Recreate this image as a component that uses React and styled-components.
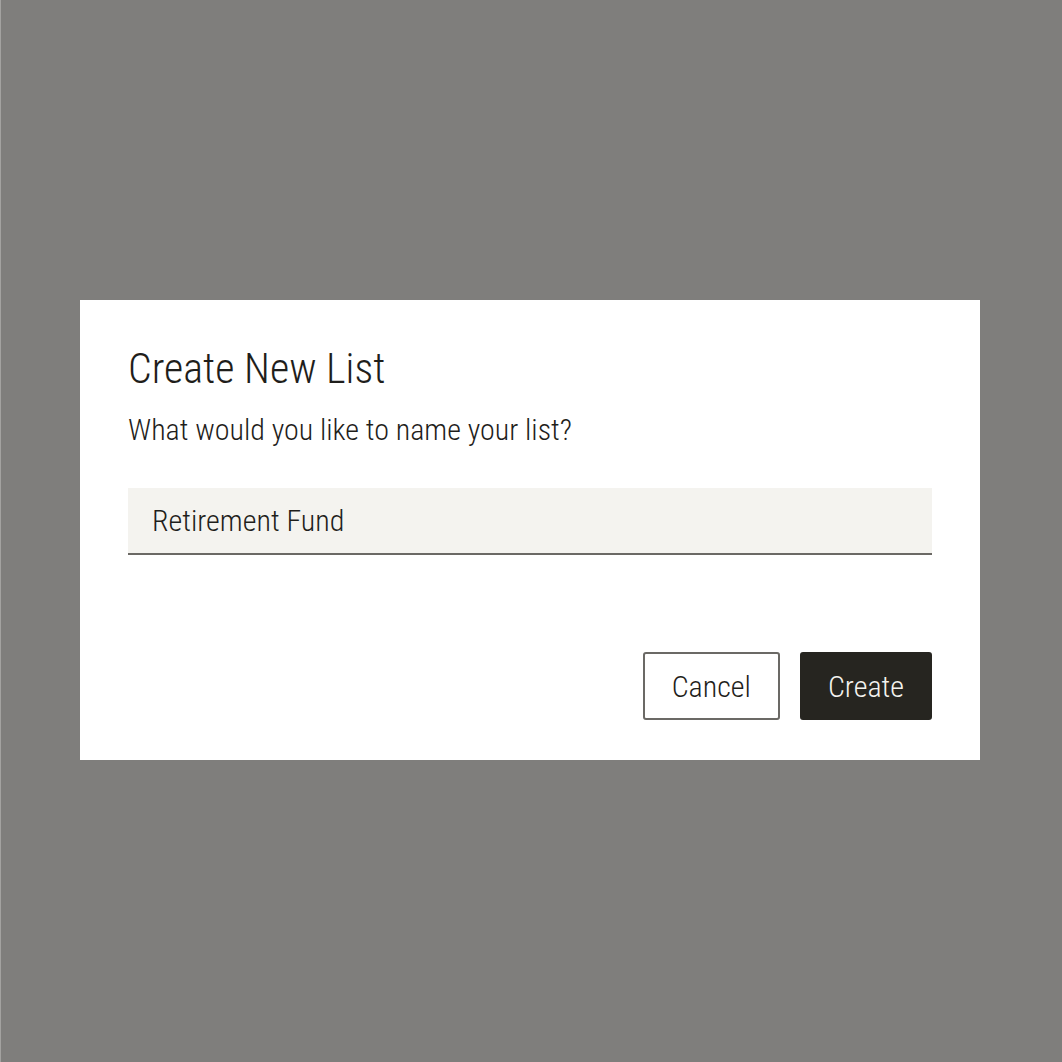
import { useState } from "react";
import styled, { createGlobalStyle } from "styled-components";

const GlobalStyle = createGlobalStyle`
  html, body {
    margin: 0;
    padding: 0;
  }
  body {
    font-family: Roboto, "Liberation Sans", sans-serif;
    font-stretch: 75%;
    font-weight: 300;
  }
  * {
    box-sizing: border-box;
  }
`;

const Overlay = styled.div`
  width: 100%;
  height: 100vh;
  background-color: #7f7e7c;
  border-left: 1px solid #a3a2a0;
  padding: 0 3px 2px 0;
  display: flex;
  justify-content: center;
  align-items: center;
`;

const Dialog = styled.div`
  width: 900px;
  background-color: #fff;
  padding: 40px 48px 40px;
  display: flex;
  flex-direction: column;
`;

const Title = styled.h2`
  margin: 0;
  font-size: 42px;
  font-weight: 300;
  line-height: 57px;
  color: #1f1e1b;
`;

const Prompt = styled.p`
  margin: 16px 0 0;
  font-size: 30px;
  line-height: 34px;
  color: #1f1e1b;
`;

const Input = styled.input`
  margin-top: 41px;
  width: 100%;
  height: 67px;
  border: none;
  border-radius: 0;
  border-bottom: 2px solid #6b6965;
  background-color: #f4f3ef;
  padding: 0 24px;
  font: inherit;
  font-size: 30px;
  color: #1f1e1b;
  outline: none;
`;

const Actions = styled.div`
  margin-top: 97px;
  display: flex;
  justify-content: flex-end;
  gap: 20px;
`;

const Button = styled.button`
  height: 68px;
  padding: 0 ${(p) => (p.$primary ? "26px" : "27px")};
  border-radius: 3px;
  border: 2px solid ${(p) => (p.$primary ? "#262520" : "#6b6965")};
  background-color: ${(p) => (p.$primary ? "#262520" : "#fff")};
  color: ${(p) => (p.$primary ? "#f4f3ef" : "#1f1e1b")};
  font: inherit;
  font-size: 30px;
  cursor: pointer;
`;

const App = () => {
  const [name, setName] = useState("Retirement Fund");

  return (
    <>
      <GlobalStyle />
      <Overlay>
        <Dialog>
          <Title>Create New List</Title>
          <Prompt>What would you like to name your list?</Prompt>
          <Input value={name} onChange={(e) => setName(e.target.value)} />
          <Actions>
            <Button>Cancel</Button>
            <Button $primary>Create</Button>
          </Actions>
        </Dialog>
      </Overlay>
    </>
  );
};

export default App;
